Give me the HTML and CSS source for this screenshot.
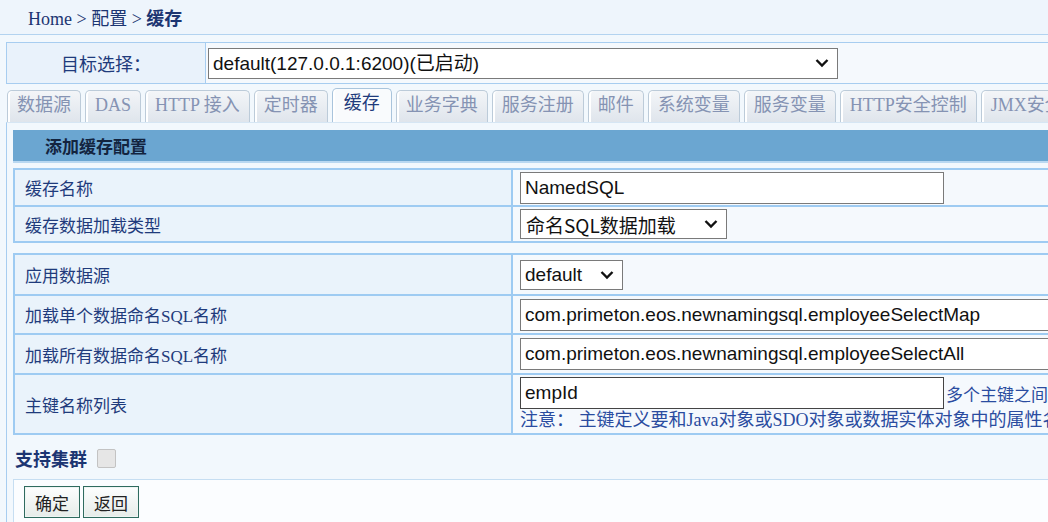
FILE: index.html
```html
<!DOCTYPE html>
<html>
    <head>
        <meta charset="utf-8">
        <title>缓存</title>
        <link rel="stylesheet" href="styles.css">
    </head>
    <body>
        <div id="crumb">Home &gt; 配置 &gt; <b>缓存</b></div>

        <div id="target">
            <div class="target-label">目标选择：</div>
            <div class="target-value">
                <span class="pick pick-wide">
                    <select><option>default(127.0.0.1:6200)(已启动)</option></select>
                    <svg width="14" height="10" viewBox="0 0 14 10"><path d="M1.5 2 L7 7.5 L12.5 2" fill="none" stroke="#111" stroke-width="2.4"/></svg>
                </span>
            </div>
        </div>

        <div id="tabs">
            <div class="tab">数据源</div>
            <div class="tab">DAS</div>
            <div class="tab">HTTP 接入</div>
            <div class="tab">定时器</div>
            <div class="tab active">缓存</div>
            <div class="tab">业务字典</div>
            <div class="tab">服务注册</div>
            <div class="tab">邮件</div>
            <div class="tab">系统变量</div>
            <div class="tab">服务变量</div>
            <div class="tab">HTTP安全控制</div>
            <div class="tab">JMX安全控制</div>
        </div>

        <div id="panel">
            <div class="title">添加缓存配置</div>

            <table class="form">
                <colgroup><col class="col-label"><col></colgroup>
                <tr class="r37">
                    <td class="label">缓存名称</td>
                    <td class="value"><input class="text short" type="text" value="NamedSQL"></td>
                </tr>
                <tr class="r36">
                    <td class="label">缓存数据加载类型</td>
                    <td class="value">
                        <span class="pick pick-type">
                            <select><option>命名SQL数据加载</option></select>
                            <svg width="14" height="10" viewBox="0 0 14 10"><path d="M1.5 2 L7 7.5 L12.5 2" fill="none" stroke="#111" stroke-width="2.4"/></svg>
                        </span>
                    </td>
                </tr>
            </table>

            <table class="form second">
                <colgroup><col class="col-label"><col></colgroup>
                <tr class="r41">
                    <td class="label">应用数据源</td>
                    <td class="value">
                        <span class="pick pick-ds">
                            <select><option>default</option></select>
                            <svg width="14" height="10" viewBox="0 0 14 10"><path d="M1.5 2 L7 7.5 L12.5 2" fill="none" stroke="#111" stroke-width="2.4"/></svg>
                        </span>
                    </td>
                </tr>
                <tr class="r39">
                    <td class="label">加载单个数据命名SQL名称</td>
                    <td class="value"><input class="text long" type="text" value="com.primeton.eos.newnamingsql.employeeSelectMap"></td>
                </tr>
                <tr class="r40">
                    <td class="label">加载所有数据命名SQL名称</td>
                    <td class="value"><input class="text long" type="text" value="com.primeton.eos.newnamingsql.employeeSelectAll"></td>
                </tr>
                <tr class="r60">
                    <td class="label">主键名称列表</td>
                    <td class="value">
                        <div class="keys">
                            <input class="text short key" type="text" value="empId"><span class="hint">多个主键之间用逗号分隔</span>
                        </div>
                        <div class="note">注意： 主键定义要和Java对象或SDO对象或数据实体对象中的属性名一致</div>
                    </td>
                </tr>
            </table>

            <div class="cluster">支持集群 <span class="check"></span></div>

            <div class="buttons">
                <button>确定</button><button>返回</button>
            </div>
        </div>
    </body>
</html>
```

FILE: styles.css
```css
body {
    margin: 0px;
    padding: 0px;
    background-color: #f2f8fd;
    overflow: hidden;
    font-family: "Liberation Serif", "Noto Sans CJK SC", serif;
    color: #1f3b7c;
}
#crumb {
    height: 34px;
    line-height: 34px;
    padding-left: 28px;
    font-size: 18px;
    color: #1c3572;
    background-color: #eef5fc;
    border-bottom: 1px solid #b3d3f0;
}
#crumb b {
    font-family: "Noto Sans CJK SC", sans-serif;
}
#target {
    display: flex;
    margin: 7px 0px 0px 6px;
    height: 40px;
    border: 1px solid #a7cdf0;
    border-right: none;
}
.target-label {
    width: 198px;
    border-right: 1px solid #a7cdf0;
    background-color: #e9f2fb;
    font-family: "Noto Sans CJK SC", sans-serif;
    font-size: 18px;
    line-height: 40px;
    text-align: center;
}
.target-value {
    flex: 1;
    display: flex;
    align-items: center;
    padding-left: 2px;
    background-color: #f5f9fd;
}
.pick {
    display: inline-flex;
    align-items: center;
    box-sizing: border-box;
    border: 1px solid #7a7a7a;
    background-color: white;
    padding-right: 8px;
}
.pick select {
    -webkit-appearance: none;
    appearance: none;
    border: none;
    outline: none;
    background: transparent;
    flex: 1;
    padding: 0px 4px;
    font-family: "Liberation Sans", "Noto Sans CJK SC", sans-serif;
    font-size: 19px;
    color: #111;
}
.pick-wide {
    width: 630px;
    height: 31px;
}
.pick-type {
    width: 207px;
    height: 30px;
}
.pick-type select {
    font-family: "Noto Sans CJK SC", sans-serif;
    padding-left: 5px;
}
.pick-ds {
    width: 103px;
    height: 30px;
}
#tabs {
    display: flex;
    gap: 4px;
    margin: 4px 0px 0px 7px;
    height: 34px;
    align-items: flex-end;
    overflow: hidden;
    white-space: nowrap;
}
.tab {
    flex-shrink: 0;
    box-sizing: border-box;
    height: 32px;
    padding: 0px 9px;
    border: 1px solid #bccbd9;
    border-bottom: none;
    border-radius: 5px 5px 0px 0px;
    background: linear-gradient(#f3f5f8, #dfe5ec);
    font-size: 18px;
    line-height: 28px;
    color: #8593b3;
    box-shadow: inset 2px 0px 0px #ffffff;
}
.tab.active {
    height: 34px;
    padding: 0px 11px;
    background: #f9fbfd;
    color: #1f3b7c;
    border-color: #a9c4dc;
}
#panel {
    margin-left: 6px;
    border-left: 1px solid #a7cdf0;
    border-top: 1px solid #d6e6f4;
    padding: 7px 0px 0px 6px;
    background-color: #f2f8fd;
    height: 400px;
}
.title {
    height: 31px;
    line-height: 31px;
    padding-left: 32px;
    background-color: #6ba6d1;
    border-bottom: 2px solid #b9d8f1;
    font-family: "Noto Sans CJK SC", sans-serif;
    font-weight: bold;
    font-size: 17px;
    color: #13243f;
}
.form {
    width: 1100px;
    table-layout: fixed;
    border-collapse: collapse;
    margin-top: 5px;
    font-size: 17px;
}
.form.second {
    margin-top: 10px;
}
.col-label {
    width: 498px;
}
.form td {
    border: 2px solid #9ecbf2;
    padding: 0px;
    white-space: nowrap;
    overflow: hidden;
}
.label {
    padding-left: 10px !important;
    background-color: #eaf3fb;
    color: #1f3b7c;
}
.value {
    padding-left: 7px !important;
    background-color: #f5f9fd;
}
.r37 { height: 37px; }
.r36 { height: 36px; }
.r41 { height: 41px; }
.r39 { height: 39px; }
.r40 { height: 40px; }
.r60 { height: 60px; }
.text {
    box-sizing: border-box;
    height: 32px;
    border: 1px solid #7a7a7a;
    padding: 0px 4px;
    font-family: "Liberation Sans", sans-serif;
    font-size: 19px;
    color: #111;
    background-color: white;
    outline: none;
    vertical-align: middle;
}
.short {
    width: 424px;
    flex-shrink: 0;
}
.key {
    border-color: #444;
}
.long {
    width: 560px;
}
.keys {
    display: flex;
    align-items: center;
    white-space: nowrap;
}
.hint {
    margin-left: 2px;
    font-size: 17px;
    color: #2a4ca0;
    font-family: "Noto Sans CJK SC", sans-serif;
}
.note {
    font-size: 18px;
    line-height: 22px;
    color: #2a4ca0;
    white-space: nowrap;
}
.cluster {
    display: flex;
    align-items: center;
    gap: 10px;
    margin: 11px 0px 0px 2px;
    height: 24px;
    font-family: "Noto Sans CJK SC", sans-serif;
    font-weight: bold;
    font-size: 18px;
    color: #1c3572;
}
.check {
    width: 19px;
    height: 19px;
    box-sizing: border-box;
    border: 1px solid #c3c3c3;
    background-color: #e6e6e6;
    border-radius: 2px;
}
.buttons {
    margin-top: 9px;
    padding: 6px 10px;
    border: 1px solid #c6def2;
    border-right: none;
    background-color: #fbfdff;
    height: 40px;
    display: flex;
    gap: 3px;
    align-items: flex-start;
}
.buttons button {
    height: 32px;
    padding: 0px 10px;
    border: 1px solid #2f6b5f;
    box-shadow: inset 0px 0px 0px 1px #eef5f3;
    background: linear-gradient(#fdfefe, #e6ece9);
    font-family: "Noto Sans CJK SC", sans-serif;
    font-size: 17px;
    color: #222;
}
```
